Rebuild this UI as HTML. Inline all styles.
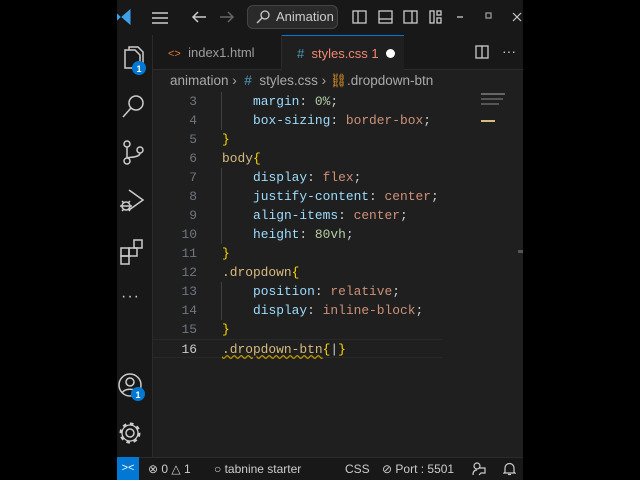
<!DOCTYPE html>
<html><head><style>
*{margin:0;padding:0;box-sizing:border-box}
body{width:640px;height:480px;background:#000;position:relative;overflow:hidden;font-family:"Liberation Sans",sans-serif;color:#ccc}
.win{position:absolute;left:117px;top:0;width:406px;height:480px;background:#1f1f1f;overflow:hidden}
.title{position:absolute;left:0;top:0;width:406px;height:35px;background:#181818}
.act{position:absolute;left:0;top:35px;width:36px;height:422px;background:#181818;border-right:1px solid #2b2b2b}
.tabs{position:absolute;left:36px;top:35px;right:0;height:35px;background:#181818;border-bottom:1px solid #2b2b2b}
.tab{position:absolute;top:0;height:35px;font-size:13px;line-height:35px}
.code{position:absolute;left:36px;top:92px;right:0;font-family:"Liberation Mono",monospace;font-size:12.9px}
.ln{position:absolute;height:19px;line-height:19px;white-space:pre}
.num{position:absolute;width:44px;text-align:right;left:0;color:#6e7681}
.status{position:absolute;left:0;top:457px;width:406px;height:23px;background:#181818;border-top:1px solid #2b2b2b;font-size:12px;line-height:22px;color:#ccc}
.p{color:#9cdcfe}.v{color:#ce9178}.n{color:#b5cea8}.s{color:#d7ba7d}.b{color:#ffd700}
svg{position:absolute}
</style></head><body>
<div class="win">
<div class="title">
<svg style="left:0;top:9px" width="14" height="16" viewBox="0 0 14 16"><path d="M13 1 L5 8 L13 15 Z M0 5 L3 8 L0 11" fill="#3ca1ea" stroke="#3ca1ea"/></svg>
<svg style="left:34px;top:11px" width="18" height="14"><path d="M1 2h16M1 7h16M1 12h16" stroke="#ccc" stroke-width="1.5"/></svg>
<svg style="left:74px;top:10px" width="16" height="14"><path d="M15 7H2M7 2L2 7l5 5" stroke="#ccc" stroke-width="1.5" fill="none"/></svg>
<svg style="left:102px;top:10px" width="16" height="14"><path d="M1 7h13M9 2l5 5-5 5" stroke="#666" stroke-width="1.5" fill="none"/></svg>
<div style="position:absolute;left:130px;top:5px;width:91px;height:24px;border:1px solid #444;border-radius:6px;background:#2a2a2a;font-size:13px;line-height:22px;padding-left:28px">Animation</div>
<svg style="left:139px;top:10px" width="14" height="14"><circle cx="9" cy="5" r="4" stroke="#ccc" fill="none" stroke-width="1.3"/><path d="M6 8L1 13" stroke="#ccc" stroke-width="1.3"/></svg>
<svg style="left:235px;top:10px" width="140" height="16"><g stroke="#ccc" stroke-width="1.3" fill="none"><rect x="1" y="1" width="13" height="12"/><path d="M6 1v12"/><rect x="27" y="1" width="13" height="12"/><path d="M27 9h13"/><rect x="52" y="1" width="13" height="12"/><path d="M60 1v12"/><rect x="78" y="1" width="4" height="12"/><rect x="85" y="1" width="4" height="4"/><rect x="85" y="8" width="4" height="5"/><path d="M105 7h6"/><rect x="134" y="3" width="5" height="5" stroke="#999"/></g></svg>
<svg style="left:395px;top:12px" width="10" height="10"><path d="M1 1l8 8M9 1l-8 8" stroke="#ccc" stroke-width="1.2"/></svg>
</div>
<div class="act">
<svg style="left:3px;top:11px" width="30" height="30"><g stroke="#ccc" stroke-width="1.5" fill="none"><path d="M5 4h10l5 5v13H5z"/><path d="M9 4V1h9l5 5v12h-3"/></g><circle cx="19" cy="22" r="7" fill="#0078d4"/><text x="19" y="26" font-size="9" font-weight="bold" fill="#fff" text-anchor="middle" font-family="Liberation Sans">1</text></svg>
<svg style="left:4px;top:59px" width="26" height="26"><circle cx="15" cy="9" r="7" stroke="#ccc" stroke-width="1.5" fill="none"/><path d="M10 14L2 23" stroke="#ccc" stroke-width="1.5"/></svg>
<svg style="left:4px;top:105px" width="26" height="28"><g stroke="#ccc" stroke-width="1.5" fill="none"><circle cx="6" cy="4" r="3"/><circle cx="6" cy="21" r="3"/><circle cx="19" cy="10" r="3"/><path d="M6 7v11M19 13c0 5-12 4-13 5"/></g></svg>
<svg style="left:2px;top:153px" width="28" height="28"><g stroke="#ccc" stroke-width="1.5" fill="none"><path d="M10 2l14 10-14 10"/><circle cx="7" cy="18" r="4"/><path d="M1 18h12M3 13l2 2M11 13l-2 2M3 23l2-2M11 23l-2-2"/></g></svg>
<svg style="left:2px;top:203px" width="28" height="28"><g stroke="#ccc" stroke-width="1.5" fill="none"><rect x="2" y="10" width="8" height="8"/><rect x="10" y="10" width="8" height="8"/><rect x="2" y="18" width="8" height="8"/><rect x="15" y="2" width="8" height="8"/></g></svg>
<div style="position:absolute;left:4px;top:253px;font-size:16px;letter-spacing:1px;color:#ccc">···</div>
<svg style="left:1px;top:337px" width="30" height="32"><circle cx="12" cy="13" r="11" stroke="#ccc" stroke-width="1.5" fill="none"/><circle cx="12" cy="10" r="4" stroke="#ccc" stroke-width="1.5" fill="none"/><path d="M4 21c3-5 13-5 16 0" stroke="#ccc" stroke-width="1.5" fill="none"/><circle cx="20" cy="22" r="7" fill="#0078d4"/><text x="20" y="26" font-size="9" font-weight="bold" fill="#fff" text-anchor="middle" font-family="Liberation Sans">1</text></svg>
<svg style="left:0px;top:385px" width="26" height="26"><circle cx="13" cy="13" r="4" stroke="#ccc" stroke-width="1.5" fill="none"/><circle cx="13" cy="13" r="9" stroke="#ccc" stroke-width="3" stroke-dasharray="3.5 3.5" fill="none"/><circle cx="13" cy="13" r="8" stroke="#ccc" stroke-width="1.3" fill="none"/></svg>
</div>
<div class="tabs">
<div class="tab" style="left:0;width:129px;border-right:1px solid #2b2b2b;padding-left:15px"><span style="color:#e37933;font-size:11px">&lt;&gt;</span>&nbsp;&nbsp;<span style="color:#9d9d9d">index1.html</span></div>
<div class="tab" style="left:129px;width:122px;background:#1f1f1f;border-top:1px solid #0078d4;padding-left:15px;height:36px"><span style="color:#519aba">#</span>&nbsp;&nbsp;<span style="color:#f48771">styles.css 1</span><span style="position:absolute;left:104px;top:13px;width:9px;height:9px;border-radius:50%;background:#fff"></span></div>
<svg style="left:322px;top:10px" width="14" height="14"><rect x="1" y="1" width="12" height="12" stroke="#ccc" stroke-width="1.3" fill="none"/><path d="M7 1v12" stroke="#ccc" stroke-width="1.3"/></svg>
<div style="position:absolute;left:349px;top:0;font-size:14px;line-height:33px;color:#ccc">···</div>
</div>
<div style="position:absolute;left:53px;top:72px;font-size:13.5px;line-height:18px;color:#a9a9a9;white-space:pre">animation ›  <span style="color:#519aba">#</span>  styles.css › <span style="color:#ee9d28">⛓</span>.dropdown-btn</div>
<div class="code">
<div class="ln" style="top:0"><span class="num">3</span><span style="position:absolute;left:100px"><span class="p">margin</span>: <span class="n">0%</span>;</span></div>
<div class="ln" style="top:19px"><span class="num">4</span><span style="position:absolute;left:100px"><span class="p">box-sizing</span>: <span class="v">border-box</span>;</span></div>
<div class="ln" style="top:38px"><span class="num">5</span><span style="position:absolute;left:69px" class="b">}</span></div>
<div class="ln" style="top:57px"><span class="num">6</span><span style="position:absolute;left:69px"><span class="s">body</span><span class="b">{</span></span></div>
<div class="ln" style="top:76px"><span class="num">7</span><span style="position:absolute;left:100px"><span class="p">display</span>: <span class="v">flex</span>;</span></div>
<div class="ln" style="top:95px"><span class="num">8</span><span style="position:absolute;left:100px"><span class="p">justify-content</span>: <span class="v">center</span>;</span></div>
<div class="ln" style="top:114px"><span class="num">9</span><span style="position:absolute;left:100px"><span class="p">align-items</span>: <span class="v">center</span>;</span></div>
<div class="ln" style="top:133px"><span class="num">10</span><span style="position:absolute;left:100px"><span class="p">height</span>: <span class="n">80vh</span>;</span></div>
<div class="ln" style="top:152px"><span class="num">11</span><span style="position:absolute;left:69px" class="b">}</span></div>
<div class="ln" style="top:171px"><span class="num">12</span><span style="position:absolute;left:69px"><span class="s">.dropdown</span><span class="b">{</span></span></div>
<div class="ln" style="top:190px"><span class="num">13</span><span style="position:absolute;left:100px"><span class="p">position</span>: <span class="v">relative</span>;</span></div>
<div class="ln" style="top:209px"><span class="num">14</span><span style="position:absolute;left:100px"><span class="p">display</span>: <span class="v">inline-block</span>;</span></div>
<div class="ln" style="top:228px"><span class="num">15</span><span style="position:absolute;left:69px" class="b">}</span></div>
<div class="ln" style="top:247px;left:0;width:290px;border-top:1px solid #282828;border-bottom:1px solid #282828"><span class="num" style="color:#ccc">16</span><span style="position:absolute;left:69px"><span class="s" style="text-decoration:underline wavy #b89500">.dropdown-btn</span><span class="b">{</span><span style="color:#ccc">|</span><span class="b">}</span></span></div>
<div style="position:absolute;left:68px;top:0;width:1px;height:38px;background:#404040"></div>
<div style="position:absolute;left:68px;top:76px;width:1px;height:76px;background:#404040"></div>
<div style="position:absolute;left:68px;top:190px;width:1px;height:38px;background:#404040"></div>
</div>
<div style="position:absolute;left:364px;top:93px;width:24px;height:2px;background:#666"></div>
<div style="position:absolute;left:364px;top:98px;width:22px;height:2px;background:#555"></div>
<div style="position:absolute;left:364px;top:103px;width:18px;height:2px;background:#555"></div>
<div style="position:absolute;left:364px;top:120px;width:14px;height:2px;background:#d7ba7d"></div>
<div style="position:absolute;left:401px;top:250px;width:5px;height:3px;background:#555"></div>
<div class="status">
<div style="position:absolute;left:0;top:-1px;width:22px;height:23px;background:#0078d4;color:#fff;font-size:11px;text-align:center">&gt;&lt;</div>
<div style="position:absolute;left:31px;white-space:pre">⊗ 0 △ 1</div>
<div style="position:absolute;left:97px;white-space:pre">○ tabnine starter</div>
<div style="position:absolute;left:228px">CSS</div>
<div style="position:absolute;left:265px;white-space:pre">⊘ Port : 5501</div>
<svg style="left:355px;top:4px" width="14" height="14"><g stroke="#ccc" stroke-width="1.2" fill="none"><circle cx="5" cy="4" r="3"/><path d="M1 13c0-4 2-5 4-5M7 6h6v5H9l-2 2"/></g></svg>
<svg style="left:386px;top:4px" width="13" height="14"><g stroke="#ccc" stroke-width="1.2" fill="none"><path d="M2 10V6a4.5 4.5 0 019 0v4l1 1H1z"/><path d="M5 12.5h3"/></g></svg>
</div>
</div>
</body></html>
